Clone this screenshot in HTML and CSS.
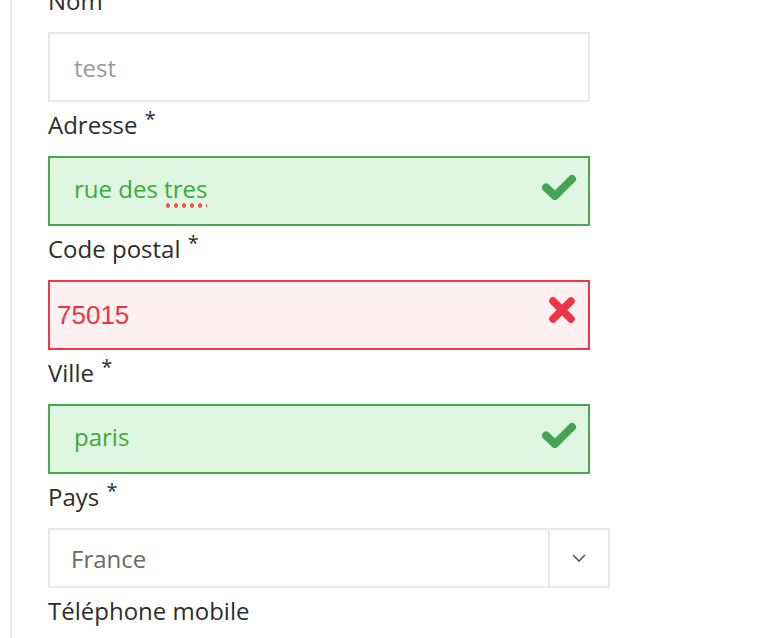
FILE: index.html
```html
<!DOCTYPE html>
<html lang="fr">
<head>
<meta charset="utf-8">
<title>Adresse</title>
<link rel="stylesheet" href="styles.css">
</head>
<body>
<div class="panel">
  <div class="field">
    <div class="label">Nom</div>
    <div class="input"><span class="value">test</span></div>
  </div>
  <div class="field">
    <div class="label">Adresse <span class="req">*</span></div>
    <div class="input valid"><span class="value">rue des <span class="typo">tres</span></span><svg class="icon check" viewBox="0 0 36 28" width="36" height="28"><polyline points="5,13.5 14,22 31,5" fill="none" stroke="#45a451" stroke-width="8" stroke-linecap="round" stroke-linejoin="round"/></svg></div>
  </div>
  <div class="field">
    <div class="label">Code postal <span class="req">*</span></div>
    <div class="input invalid"><span class="value">75015</span><svg class="icon cross" viewBox="0 0 28 28" width="28" height="28"><path d="M5 5 L23 23 M23 5 L5 23" fill="none" stroke="#ee3446" stroke-width="7.5" stroke-linecap="round"/></svg></div>
  </div>
  <div class="field">
    <div class="label">Ville <span class="req">*</span></div>
    <div class="input valid"><span class="value">paris</span><svg class="icon check" viewBox="0 0 36 28" width="36" height="28"><polyline points="5,13.5 14,22 31,5" fill="none" stroke="#45a451" stroke-width="8" stroke-linecap="round" stroke-linejoin="round"/></svg></div>
  </div>
  <div class="field">
    <div class="label">Pays <span class="req">*</span></div>
    <div class="select">
      <div class="select-value">France</div>
      <div class="select-btn">
        <svg viewBox="0 0 14 8" width="14" height="8"><polyline points="1,1 7,7 13,1" fill="none" stroke="#555" stroke-width="1.6"/></svg>
      </div>
    </div>
  </div>
  <div class="field">
    <div class="label">Téléphone mobile</div>
  </div>
</div>
</body>
</html>
```

FILE: styles.css
```css
html, body {
  margin: 0;
  padding: 0;
  background: #fff;
  overflow: hidden;
}
body {
  font-family: "Open Sans", "DejaVu Sans", sans-serif;
  color: #2d2d2d;
}
.panel {
  margin-left: 10px;
  margin-top: -22px;
  border-left: 2px solid #e8e8e8;
  padding-left: 36px;
  height: calc(100vh + 22px);
}
.field {
  padding-top: 5px;
}
.label {
  font-size: 24px;
  line-height: 36px;
  margin-bottom: 13px;
  white-space: nowrap;
}
.req {
  font-size: 20px;
  vertical-align: 8px;
  line-height: 0;
  margin-left: 1px;
}
.input {
  position: relative;
  box-sizing: border-box;
  width: 542px;
  height: 70px;
  border: 2px solid #e8e8e8;
  display: flex;
  align-items: center;
  padding-left: 24px;
  font-size: 24px;
  color: #9a9a9a;
}
.value {
  white-space: nowrap;
}
.input.valid {
  background: #dff7e1;
  border-color: #4aa853;
  color: #3aab3c;
  padding-bottom: 6px;
}
.input.invalid {
  background: #fff0f1;
  border-color: #ef3849;
  color: #ee3346;
  font-family: "Liberation Sans", Arial, sans-serif;
  font-size: 26px;
  padding-left: 7px;
}
.typo {
  padding-bottom: 3px;
  background-image: radial-gradient(circle at 50% 50%, #f2524c 2px, rgba(242,82,76,0) 2.5px);
  background-size: 8px 5px;
  background-repeat: repeat-x;
  background-position: 0 100%;
}
.icon {
  position: absolute;
  top: 50%;
}
.icon.check {
  right: 11px;
  margin-top: -17px;
}
.icon.cross {
  right: 12px;
  margin-top: -19px;
}
.select {
  box-sizing: border-box;
  width: 562px;
  height: 60px;
  border: 2px solid #e8e8e8;
  display: flex;
}
.select-value {
  flex: 1;
  display: flex;
  align-items: center;
  padding-left: 21px;
  font-size: 24px;
  color: #6a6a6a;
}
.select-btn {
  width: 58px;
  border-left: 2px solid #e8e8e8;
  display: flex;
  align-items: center;
  justify-content: center;
}
```
